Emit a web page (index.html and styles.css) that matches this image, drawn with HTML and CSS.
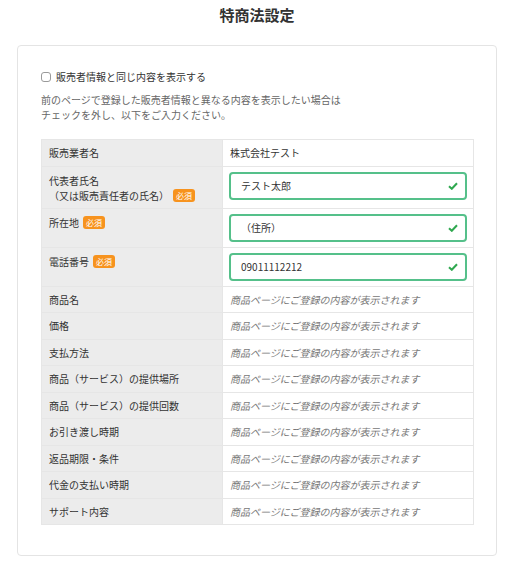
FILE: index.html
```html
<!DOCTYPE html>
<html lang="ja">
<head>
<meta charset="utf-8">
<title>特商法設定</title>
<link rel="stylesheet" href="styles.css">
</head>
<body>
<div class="page">
  <h1 class="title">特商法設定</h1>
  <div class="card">
    <label class="same">
      <span class="box"></span>
      <span>販売者情報と同じ内容を表示する</span>
    </label>
    <p class="desc">前のページで登録した販売者情報と異なる内容を表示したい場合は<br>チェックを外し、以下をご入力ください。</p>
    <table class="tbl">
      <tr>
        <th>販売業者名</th>
        <td>株式会社テスト</td>
      </tr>
      <tr class="inrow">
        <th>代表者氏名<br>（又は販売責任者の氏名）<span class="req">必須</span></th>
        <td><div class="field"><span>テスト太郎</span><svg class="ok" viewBox="0 0 10 8" width="10" height="8"><path d="M1 4.2 L3.8 6.8 L9 1.3" fill="none" stroke="#2fa84f" stroke-width="2"/></svg></div></td>
      </tr>
      <tr class="inrow">
        <th>所在地<span class="req">必須</span></th>
        <td><div class="field"><span>（住所）</span><svg class="ok" viewBox="0 0 10 8" width="10" height="8"><path d="M1 4.2 L3.8 6.8 L9 1.3" fill="none" stroke="#2fa84f" stroke-width="2"/></svg></div></td>
      </tr>
      <tr class="inrow">
        <th>電話番号<span class="req">必須</span></th>
        <td><div class="field"><span>09011112212</span><svg class="ok" viewBox="0 0 10 8" width="10" height="8"><path d="M1 4.2 L3.8 6.8 L9 1.3" fill="none" stroke="#2fa84f" stroke-width="2"/></svg></div></td>
      </tr>
      <tr><th>商品名</th><td class="ph">商品ページにご登録の内容が表示されます</td></tr>
      <tr><th>価格</th><td class="ph">商品ページにご登録の内容が表示されます</td></tr>
      <tr><th>支払方法</th><td class="ph">商品ページにご登録の内容が表示されます</td></tr>
      <tr><th>商品（サービス）の提供場所</th><td class="ph">商品ページにご登録の内容が表示されます</td></tr>
      <tr><th>商品（サービス）の提供回数</th><td class="ph">商品ページにご登録の内容が表示されます</td></tr>
      <tr><th>お引き渡し時期</th><td class="ph">商品ページにご登録の内容が表示されます</td></tr>
      <tr><th>返品期限・条件</th><td class="ph">商品ページにご登録の内容が表示されます</td></tr>
      <tr><th>代金の支払い時期</th><td class="ph">商品ページにご登録の内容が表示されます</td></tr>
      <tr><th>サポート内容</th><td class="ph">商品ページにご登録の内容が表示されます</td></tr>
    </table>
  </div>
</div>
</body>
</html>
```
FILE: styles.css
```css
* { box-sizing: border-box; }
html, body { margin: 0; padding: 0; background: #fff; }
body {
  font-family: "Noto Sans CJK JP", "Noto Sans", sans-serif;
  font-size: 10px;
  color: #333;
}
.page { padding: 0 29px 10px 17px; }
.title {
  margin: 0;
  font-size: 15px;
  line-height: 30px;
  font-weight: 700;
  text-align: center;
  color: #333;
}
.card {
  margin-top: 15px;
  border: 1px solid #e4e4e4;
  border-radius: 4px;
  padding: 23px 22px 30px 23px;
}
.same {
  display: flex;
  align-items: center;
  gap: 5px;
  line-height: 15px;
  color: #333;
}
.box {
  width: 10px;
  height: 10px;
  border: 1px solid #9a9a9a;
  border-radius: 3px;
  background: #fff;
}
.desc {
  margin: 8px 0 17px;
  line-height: 15px;
  color: #666;
}
.tbl {
  width: 100%;
  border-collapse: collapse;
}
.tbl th, .tbl td {
  border: 1px solid #e6e6e6;
  padding: 5px 7px;
  line-height: 15.5px;
  text-align: left;
  vertical-align: top;
  font-weight: 400;
}
.tbl th {
  width: 181px;
  background: #ececec;
  color: #333;
}
.tbl td { background: #fff; }
.tbl .inrow th {
  padding: 6px 7px 5px;
  line-height: 15px;
}
.tbl .inrow td { padding: 5px 6px; }
.req {
  display: inline-block;
  margin-left: 4px;
  padding: 0 3px;
  background: #f7931e;
  color: #fff;
  font-size: 8px;
  line-height: 13px;
  border-radius: 3px;
  vertical-align: 1px;
}
.field {
  height: 28px;
  border: 2px solid #55c08a;
  border-radius: 4px;
  display: flex;
  align-items: center;
  justify-content: space-between;
  padding: 0 7px 0 10px;
  color: #333;
}
.ok { display: block; }
.ph {
  color: #777;
  font-style: italic;
}
```
